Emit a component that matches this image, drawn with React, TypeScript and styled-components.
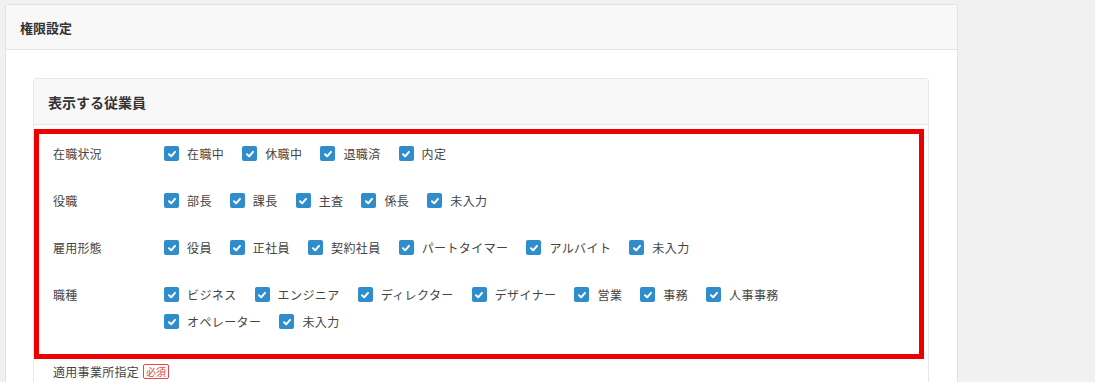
import { FunctionComponent } from "react";
import styled, { createGlobalStyle } from "styled-components";

const GlobalStyle = createGlobalStyle`
  html, body {
    margin: 0;
    padding: 0;
    background: #f1f1f1;
    font-family: "Noto Sans CJK JP", "Noto Sans", sans-serif;
    color: #333;
  }
`;

const GROUPS: { label: string; options: string[] }[] = [
  { label: "在職状況", options: ["在職中", "休職中", "退職済", "内定"] },
  { label: "役職", options: ["部長", "課長", "主査", "係長", "未入力"] },
  {
    label: "雇用形態",
    options: ["役員", "正社員", "契約社員", "パートタイマー", "アルバイト", "未入力"],
  },
  {
    label: "職種",
    options: [
      "ビジネス",
      "エンジニア",
      "ディレクター",
      "デザイナー",
      "営業",
      "事務",
      "人事事務",
      "オペレーター",
      "未入力",
    ],
  },
];

const CheckIcon = () => (
  <svg width="10" height="10" viewBox="0 0 10 10">
    <polyline
      points="2,5.2 4.2,7.3 8,2.9"
      fill="none"
      stroke="#fff"
      strokeWidth="2"
      strokeLinecap="round"
      strokeLinejoin="round"
    />
  </svg>
);

const App: FunctionComponent = () => {
  return (
    <>
      <GlobalStyle />
      <Page>
        <OuterCard>
          <OuterHeader>権限設定</OuterHeader>
          <OuterBody>
            <InnerCard>
              <InnerHeader>表示する従業員</InnerHeader>
              <Highlight>
                {GROUPS.map((group) => (
                  <Row key={group.label}>
                    <RowLabel>{group.label}</RowLabel>
                    <Options>
                      {group.options.map((opt) => (
                        <Option key={opt}>
                          <Box>
                            <CheckIcon />
                          </Box>
                          {opt}
                        </Option>
                      ))}
                    </Options>
                  </Row>
                ))}
              </Highlight>
              <FieldRow>
                適用事業所指定
                <Required>必須</Required>
              </FieldRow>
            </InnerCard>
          </OuterBody>
        </OuterCard>
      </Page>
    </>
  );
};
export default App;

const Page = styled.div`
  padding: 4px 0 0 5px;
  height: 378px;
  overflow: hidden;
`;

const OuterCard = styled.div`
  width: 951px;
  background: #fff;
  border: 1px solid #e2e2e2;
  border-radius: 3px;
`;

const OuterHeader = styled.div`
  height: 44px;
  display: flex;
  align-items: center;
  padding-left: 14px;
  background: #f8f8f8;
  border-bottom: 1px solid #e4e4e4;
  font-size: 13px;
  font-weight: bold;
  color: #333;
`;

const OuterBody = styled.div`
  padding: 28px 28px 40px 27px;
`;

const InnerCard = styled.div`
  border: 1px solid #e6e6e6;
  border-radius: 3px;
  background: #fff;
`;

const InnerHeader = styled.div`
  height: 45px;
  display: flex;
  align-items: center;
  padding-left: 14px;
  background: #f8f8f8;
  border-bottom: 1px solid #e8e8e8;
  font-size: 14px;
  font-weight: bold;
  color: #333;
`;

const Highlight = styled.div`
  margin: 4px 4px 0 0;
  border: 5px solid #ee0000;
  padding: 6px 14px 19px;
  display: flex;
  flex-direction: column;
  gap: 20px;
`;

const Row = styled.div`
  display: flex;
  align-items: flex-start;
`;

const RowLabel = styled.div`
  width: 111px;
  flex-shrink: 0;
  line-height: 27px;
  font-size: 12px;
  color: #444;
  letter-spacing: 0.2px;
`;

const Options = styled.div`
  display: flex;
  flex-wrap: wrap;
  column-gap: 18px;
  max-width: 700px;
`;

const Option = styled.label`
  display: flex;
  align-items: center;
  gap: 8px;
  line-height: 27px;
  font-size: 12px;
  color: #444;
  letter-spacing: 0.4px;
`;

const Box = styled.span`
  width: 15px;
  height: 15px;
  border-radius: 2px;
  background: #2f8dcc;
  display: flex;
  align-items: center;
  justify-content: center;
`;

const FieldRow = styled.div`
  display: flex;
  align-items: center;
  gap: 4px;
  padding: 2px 0 20px 19px;
  height: 20px;
  font-size: 12px;
  color: #444;
  letter-spacing: 0.3px;
`;

const Required = styled.span`
  border: 1px solid #e0484d;
  color: #e0484d;
  font-size: 10px;
  line-height: 13px;
  padding: 0 2px;
  border-radius: 2px;
  letter-spacing: 0;
`;
